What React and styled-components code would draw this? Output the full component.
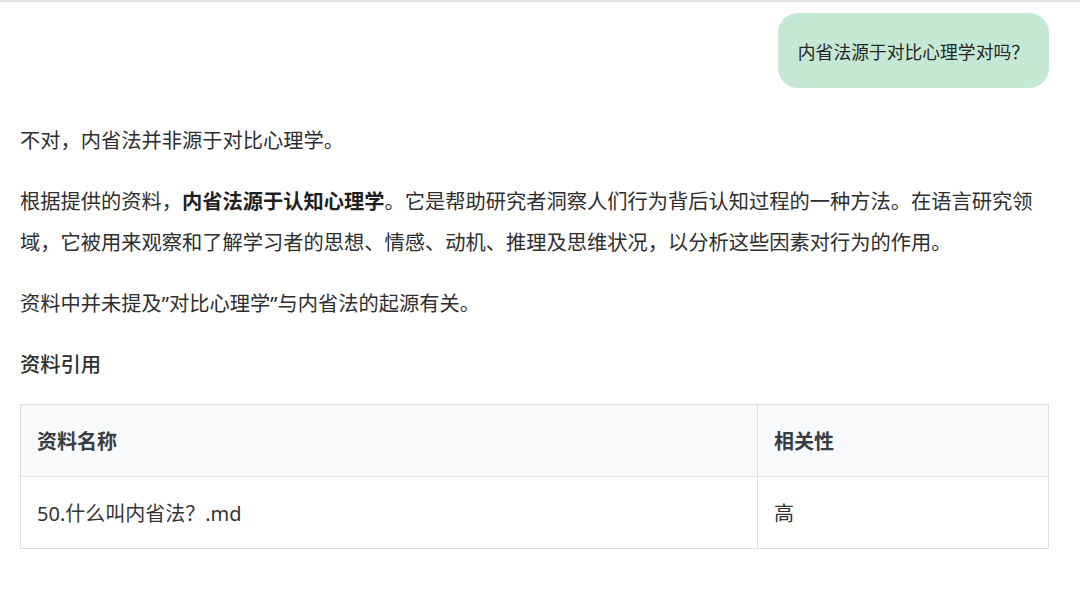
import React from "react";
import styled, { createGlobalStyle } from "styled-components";

const Global = createGlobalStyle`
  html, body { margin: 0; padding: 0; background: #ffffff; }
  body {
    font-family: "Noto Sans", "Noto Sans CJK SC", sans-serif;
    color: #2b2b2b;
  }
`;

const Page = styled.div`
  border-top: 2px solid #e2e2e2;
  padding: 11px 31px 40px 20px;
  display: flex;
  flex-direction: column;
`;

const UserRow = styled.div`
  display: flex;
  justify-content: flex-end;
  margin-bottom: 32px;
`;

const Bubble = styled.div`
  background: #c5e8d4;
  border-radius: 20px;
  height: 75px;
  box-sizing: border-box;
  padding: 0 20px 0 20px;
  display: flex;
  align-items: center;
  font-size: 17.8px;
  color: #262626;
`;

const Para = styled.p`
  margin: 0 0 20px;
  font-size: 20.25px;
  line-height: 41px;
  color: #2e2e2e;
`;

const Strong = styled.strong`
  font-weight: 700;
  color: #1f1f1f;
`;

const Heading = styled.div`
  font-size: 20.25px;
  line-height: 41px;
  font-weight: 500;
  color: #2e2e2e;
  margin-bottom: 19px;
`;

const Table = styled.table`
  width: 100%;
  border-collapse: collapse;
  table-layout: fixed;
`;

const Th = styled.th`
  background: #f8f9fb;
  border: 1px solid #dcdfe4;
  height: 72px;
  padding: 0 16px;
  text-align: left;
  font-size: 20px;
  font-weight: 700;
  color: #373c44;
  box-sizing: border-box;
`;

const Td = styled.td`
  border: 1px solid #dcdfe4;
  height: 72px;
  padding: 0 16px;
  text-align: left;
  font-size: 20px;
  color: #333;
  box-sizing: border-box;
`;

export default function App() {
  return (
    <>
      <Global />
      <Page>
        <UserRow>
          <Bubble>内省法源于对比心理学对吗？</Bubble>
        </UserRow>
        <Para>不对，内省法并非源于对比心理学。</Para>
        <Para>
          根据提供的资料，<Strong>内省法源于认知心理学</Strong>。它是帮助研究者洞察人们行为背后认知过程的一种方法。在语言研究领域，它被用来观察和了解学习者的思想、情感、动机、推理及思维状况，以分析这些因素对行为的作用。
        </Para>
        <Para>资料中并未提及”对比心理学”与内省法的起源有关。</Para>
        <Heading>资料引用</Heading>
        <Table>
          <colgroup>
            <col style={{ width: "737px" }} />
            <col />
          </colgroup>
          <thead>
            <tr>
              <Th>资料名称</Th>
              <Th>相关性</Th>
            </tr>
          </thead>
          <tbody>
            <tr>
              <Td>50.什么叫内省法？.md</Td>
              <Td>高</Td>
            </tr>
          </tbody>
        </Table>
      </Page>
    </>
  );
}
